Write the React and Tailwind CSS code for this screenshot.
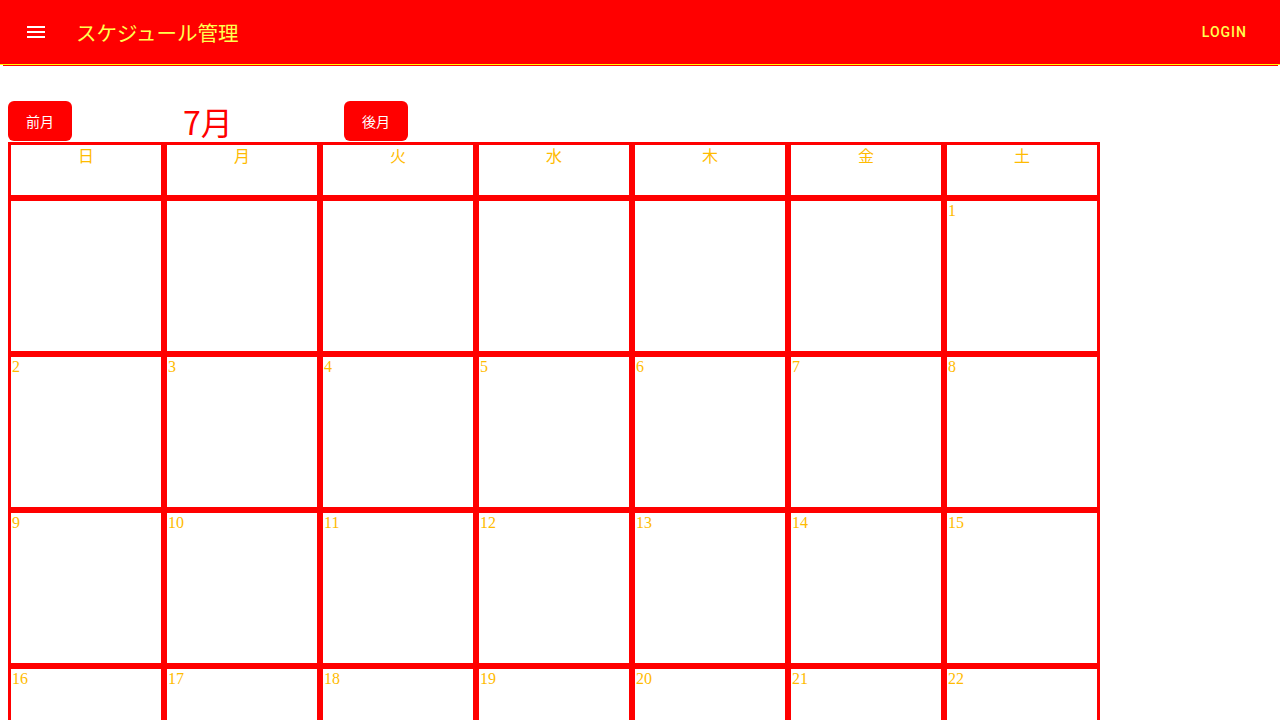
import React from "react";

const days = ["日", "月", "火", "水", "木", "金", "土"];
const weeks = [
  [null, null, null, null, null, null, 1],
  [2, 3, 4, 5, 6, 7, 8],
  [9, 10, 11, 12, 13, 14, 15],
  [16, 17, 18, 19, 20, 21, 22],
  [23, 24, 25, 26, 27, 28, 29],
  [30, 31, null, null, null, null, null],
];

export default function App() {
  return (
    <div className="h-screen overflow-hidden bg-white" style={{ fontFamily: '"Noto Sans CJK JP", sans-serif' }}>
      <header className="h-16 bg-[#ff0000] flex items-center pl-6 pr-[24px]">
        <svg width="24" height="24" viewBox="0 0 24 24" className="shrink-0">
          <path d="M3 18h18v-2H3v2zm0-5h18v-2H3v2zm0-7v2h18V6H3z" fill="#ffffff" />
        </svg>
        <div
          className="ml-[28px] text-[20.5px] text-[#ffff50] leading-none"
          style={{ fontFamily: '"Noto Sans CJK JP", sans-serif' }}
        >
          スケジュール管理
        </div>
        <div className="flex-1" />
        <div
          className="px-2 text-[14px] font-medium tracking-[1px] text-[#ffff50] mr-[1px]"
          style={{ fontFamily: '"Roboto", sans-serif' }}
        >
          LOGIN
        </div>
      </header>
      <div className="h-px bg-[#ffff00]" />
      <div className="h-px bg-[#ff0000] ml-[3px] mr-[2px]" />
      <main className="pl-2 pt-[35px]">
        <div className="flex items-center h-10">
          <button className="w-16 h-10 rounded-md bg-[#ff0000] text-white text-[14px]">前月</button>
          <div className="w-[272px] text-center text-[32px] leading-none text-[#ff0000]">7月</div>
          <button className="w-16 h-10 rounded-md bg-[#ff0000] text-white text-[14px]">後月</button>
        </div>
        <div
          className="grid grid-cols-[repeat(7,156px)] mt-px text-[16px]"
          style={{ fontFamily: '"Liberation Serif", "Noto Sans CJK JP", serif' }}
        >
          {days.map((d) => (
            <div key={d} className="h-14 border-[3px] border-[#ff0000] text-center text-[#ffbb00] pt-[2px] leading-[20px]">
              {d}
            </div>
          ))}
          {weeks.flat().map((n, i) => (
            <div key={i} className="h-[156px] border-[3px] border-[#ff0000] text-[#ffbb00] leading-[20px] pl-px">
              {n ?? ""}
            </div>
          ))}
        </div>
      </main>
    </div>
  );
}
